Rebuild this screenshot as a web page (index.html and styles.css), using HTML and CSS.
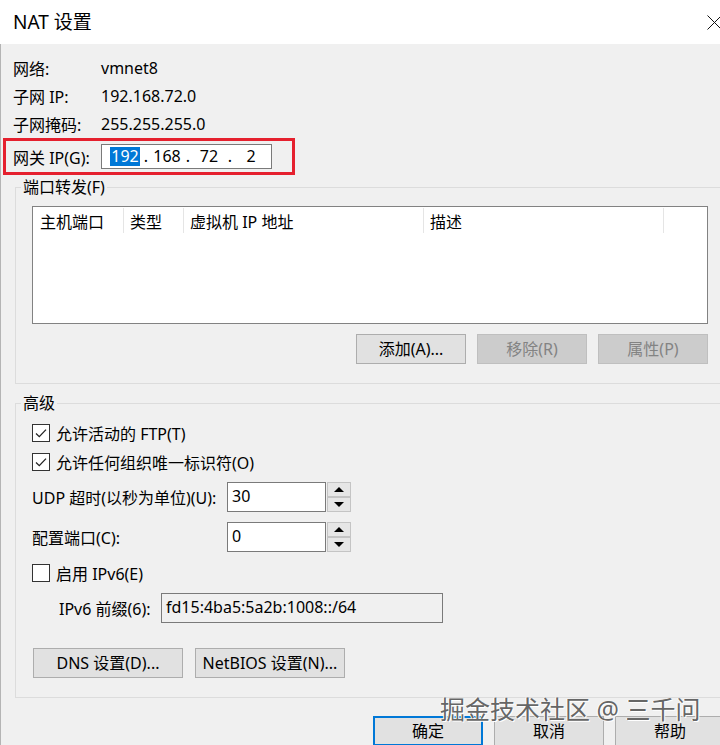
FILE: index.html
```html
<!DOCTYPE html>
<html lang="zh-CN">
<head>
<meta charset="utf-8">
<title>NAT 设置</title>
<link rel="stylesheet" href="styles.css">
</head>
<body>
<header class="titlebar">
  <span class="title">NAT 设置</span>
  <svg class="close" width="15" height="15" viewBox="0 0 15 15"><path d="M0.5 0.5L14.5 14.5M14.5 0.5L0.5 14.5" stroke="#111" stroke-width="1" fill="none"/></svg>
</header>
<main class="content">
  <div class="info-row"><span class="info-label">网络:</span><span>vmnet8</span></div>
  <div class="info-row"><span class="info-label">子网 IP:</span><span>192.168.72.0</span></div>
  <div class="info-row"><span class="info-label">子网掩码:</span><span>255.255.255.0</span></div>
  <div class="gateway">
    <span class="info-label">网关 IP(G):</span>
    <div class="ipbox">
      <span class="ipfield"><span class="sel">192</span></span><span class="ipdot">.</span>
      <span class="ipfield">168</span><span class="ipdot">.</span>
      <span class="ipfield">72</span><span class="ipdot">.</span>
      <span class="ipfield">2</span>
    </div>
  </div>

  <fieldset class="group group-pf">
    <legend>端口转发(F)</legend>
    <div class="pf-body">
      <div class="listview">
        <div class="lv-head">
          <span class="col c1">主机端口</span>
          <span class="col c2">类型</span>
          <span class="col c3">虚拟机 IP 地址</span>
          <span class="col c4">描述</span>
        </div>
      </div>
      <div class="btnrow">
        <button class="btn">添加(A)...</button>
        <button class="btn disabled">移除(R)</button>
        <button class="btn disabled">属性(P)</button>
      </div>
    </div>
  </fieldset>

  <fieldset class="group group-adv">
    <legend>高级</legend>
    <div class="adv-body">
      <div class="cb-row">
        <span class="cb"><svg width="16" height="16" viewBox="0 0 16 16"><path d="M3 8.5L6.3 11.6L13 4.6" stroke="#222" stroke-width="1.3" fill="none"/></svg></span>
        <span>允许活动的 FTP(T)</span>
      </div>
      <div class="cb-row r2">
        <span class="cb"><svg width="16" height="16" viewBox="0 0 16 16"><path d="M3 8.5L6.3 11.6L13 4.6" stroke="#222" stroke-width="1.3" fill="none"/></svg></span>
        <span>允许任何组织唯一标识符(O)</span>
      </div>
      <div class="field-row udp">
        <span class="field-label">UDP 超时(以秒为单位)(U):</span>
        <span class="edit">30</span>
        <span class="spin">
          <span class="spin-btn"><svg width="10" height="5" viewBox="0 0 10 5"><path d="M5 0L10 5H0Z" fill="#000"/></svg></span>
          <span class="spin-btn"><svg width="10" height="5" viewBox="0 0 10 5"><path d="M0 0H10L5 5Z" fill="#000"/></svg></span>
        </span>
      </div>
      <div class="field-row cfg">
        <span class="field-label">配置端口(C):</span>
        <span class="edit">0</span>
        <span class="spin">
          <span class="spin-btn"><svg width="10" height="5" viewBox="0 0 10 5"><path d="M5 0L10 5H0Z" fill="#000"/></svg></span>
          <span class="spin-btn"><svg width="10" height="5" viewBox="0 0 10 5"><path d="M0 0H10L5 5Z" fill="#000"/></svg></span>
        </span>
      </div>
      <div class="cb-row r3">
        <span class="cb"></span>
        <span>启用 IPv6(E)</span>
      </div>
      <div class="field-row prefix">
        <span class="prefix-label">IPv6 前缀(6):</span>
        <span class="edit readonly">fd15:4ba5:5a2b:1008::/64</span>
      </div>
      <div class="dns-row">
        <button class="btn wide">DNS 设置(D)...</button>
        <button class="btn wide">NetBIOS 设置(N)...</button>
      </div>
    </div>
  </fieldset>

  <div class="footer">
    <button class="btn default">确定</button>
    <button class="btn">取消</button>
    <button class="btn">帮助</button>
  </div>
</main>
<div class="watermark">掘金技术社区 @ 三千问</div>
</body>
</html>
```

FILE: styles.css
```css
* { box-sizing: border-box; }
html, body { margin: 0; padding: 0; }
body {
  width: 720px;
  height: 745px;
  overflow: hidden;
  position: relative;
  background: #f0f0f0;
  font-family: "Noto Sans", "Noto Sans CJK SC", sans-serif;
  font-size: 16px;
  color: #000;
}

.titlebar {
  height: 44px;
  background: #fff;
  display: flex;
  align-items: center;
  justify-content: space-between;
  padding-left: 13px;
}
.title { font-size: 19px; line-height: 24px; }
.close { flex-shrink: 0; margin-right: -2px; }

.content {
  padding-top: 10px;
  border-left: 1px solid #b4b4b4;
  height: 701px;
}

.info-row {
  display: flex;
  align-items: center;
  height: 28px;
  padding-left: 12px;
}
.info-label { width: 88px; flex-shrink: 0; }

.gateway {
  margin-left: 2px;
  width: 292px;
  height: 37px;
  border: 3px solid #e5202e;
  display: flex;
  align-items: center;
  padding-left: 7px;
}
.ipbox {
  width: 171px;
  height: 25px;
  border: 1px solid #7a7a7a;
  background: #fff;
  display: flex;
  align-items: center;
  padding-left: 5px;
  line-height: 19px;
}
.ipfield { width: 36px; text-align: center; flex-shrink: 0; }
.ipdot { width: 6px; text-align: center; flex-shrink: 0; }
.sel { display: inline-block; background: #0078d7; color: #fff; padding: 0 1px; }

.group {
  margin: 2px -10px 0 14px;
  border: 1px solid #dcdcdc;
  padding: 0 0 19px 0;
  min-width: 0;
}
.group legend {
  margin-left: 5px;
  padding: 0 2px;
  line-height: 20px;
}
.group-adv { margin-top: 9px; }

.pf-body { padding: 9px 0 0 16px; }
.listview {
  width: 676px;
  height: 118px;
  border: 1px solid #828282;
  background: #fff;
}
.lv-head { display: flex; }
.col {
  height: 25px;
  margin-top: 1px;
  border-right: 1px solid #e5e5e5;
  display: flex;
  align-items: center;
  padding-left: 6px;
  flex-shrink: 0;
}
.c1 { width: 91px; padding-left: 7px; }
.c2 { width: 60px; }
.c3 { width: 240px; }
.c4 { width: 240px; }

.btnrow {
  display: flex;
  justify-content: flex-end;
  gap: 11px;
  width: 676px;
  margin-top: 10px;
}
.btn {
  width: 110px;
  height: 30px;
  padding: 0;
  border: 1px solid #adadad;
  background: #e1e1e1;
  font: inherit;
  line-height: 18px;
  color: #000;
  flex-shrink: 0;
}
.btn.disabled { background: #cccccc; border-color: #bfbfbf; color: #838383; }
.btn.wide { width: 150px; }
.btn.default { border: 2px solid #0078d7; }

.adv-body {
  padding: 10px 0 0 16px;
  display: flex;
  flex-direction: column;
}
.cb-row { display: flex; align-items: center; height: 19px; }
.cb {
  width: 18px;
  height: 18px;
  border: 1px solid #333;
  background: #fff;
  margin-right: 6px;
  display: flex;
  align-items: center;
  justify-content: center;
  flex-shrink: 0;
}
.r2 { margin-top: 10px; }
.r3 { margin-top: 11px; }

.field-row { display: flex; align-items: center; height: 30px; }
.udp { margin-top: 11px; }
.cfg { margin-top: 10px; }
.prefix { margin-top: 11px; }
.field-label { width: 195px; flex-shrink: 0; }
.edit {
  width: 99px;
  height: 30px;
  border: 1px solid #7a7a7a;
  background: #fff;
  padding: 0 0 3px 4px;
  display: flex;
  align-items: center;
  flex-shrink: 0;
}
.edit.readonly { width: 282px; background: #f0f0f0; }
.spin {
  width: 24px;
  height: 30px;
  margin-left: 1px;
  display: flex;
  flex-direction: column;
  justify-content: space-between;
}
.spin-btn {
  height: 15px;
  border: 1px solid #c4c4c4;
  background: #e6e6e6;
  display: flex;
  align-items: center;
  justify-content: center;
}
.prefix-label { width: 102px; margin-left: 27px; flex-shrink: 0; }

.dns-row { display: flex; gap: 12px; margin-top: 25px; padding-left: 1px; }

.footer {
  display: flex;
  gap: 11px;
  padding-left: 372px;
  margin-top: 18px;
}

.watermark {
  position: absolute;
  left: 440px;
  top: 698px;
  font-size: 25px;
  line-height: 23px;
  color: #666;
  text-shadow: 1px 1px 0 #fff, -1px 0 0 #fff;
  white-space: nowrap;
}
```
